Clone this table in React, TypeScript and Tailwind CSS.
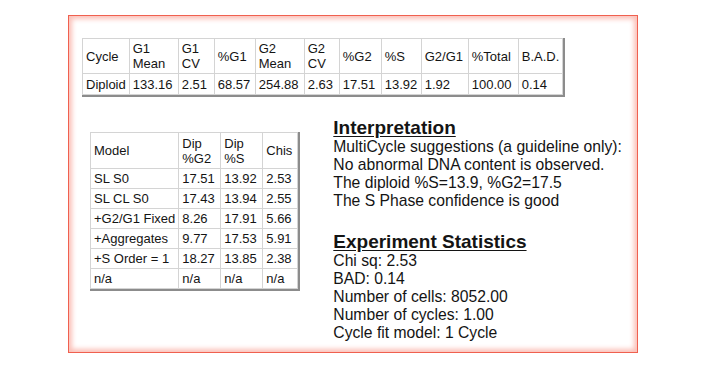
const cycleHead = ['Cycle', 'G1\nMean', 'G1\nCV', '%G1', 'G2\nMean', 'G2\nCV', '%G2', '%S', 'G2/G1', '%Total', 'B.A.D.']
const cycleRow = ['Diploid', '133.16', '2.51', '68.57', '254.88', '2.63', '17.51', '13.92', '1.92', '100.00', '0.14']
const cycleW = [46, 49, 36, 41, 49, 35, 42, 40, 47, 50, 44]

const modelHead = ['Model', 'Dip\n%G2', 'Dip\n%S', 'Chis']
const modelRows = [
  ['SL S0', '17.51', '13.92', '2.53'],
  ['SL CL S0', '17.43', '13.94', '2.55'],
  ['+G2/G1 Fixed', '8.26', '17.91', '5.66'],
  ['+Aggregates', '9.77', '17.53', '5.91'],
  ['+S Order = 1', '18.27', '13.85', '2.38'],
  ['n/a', 'n/a', 'n/a', 'n/a'],
]
const modelW = [86, 42, 42, 35]

const cell = 'border border-[#d4d4d4] px-[3px] text-left align-middle text-[13px] font-normal leading-[15px] whitespace-pre'

const App = () => {
  return (
    <div className="min-h-[368px] w-[710px] bg-white pt-[15px] font-['Liberation_Sans',Arial,sans-serif] text-[#141414]">
      <div className="ml-[68px] h-[338px] w-[570px] border border-[#f0604f] bg-white pl-[13px] pt-[22px] shadow-[inset_0_0_5px_3px_#fbc0b8]">
        <table className="table-fixed border-collapse border-t border-l border-[#a8a8a8] shadow-[1px_1px_0_1px_#8c8c8c]">
          <colgroup>
            {cycleW.map((w, i) => (
              <col key={i} style={{ width: w }} />
            ))}
          </colgroup>
          <thead>
            <tr className="h-[35px]">
              {cycleHead.map((h) => (
                <th key={h} className={cell}>
                  {h}
                </th>
              ))}
            </tr>
          </thead>
          <tbody>
            <tr className="h-[21px]">
              {cycleRow.map((v, i) => (
                <td key={i} className={cell}>
                  {v}
                </td>
              ))}
            </tr>
          </tbody>
        </table>

        <div className="mt-[23px] flex">
          <table className="mt-[14px] ml-[8px] table-fixed border-collapse self-start border-t border-l border-[#a8a8a8] shadow-[1px_1px_0_1px_#8c8c8c]">
            <colgroup>
              {modelW.map((w, i) => (
                <col key={i} style={{ width: w }} />
              ))}
            </colgroup>
            <thead>
              <tr className="h-[36px]">
                {modelHead.map((h) => (
                  <th key={h} className={cell}>
                    {h}
                  </th>
                ))}
              </tr>
            </thead>
            <tbody>
              {modelRows.map((r, i) => (
                <tr key={i} className="h-[20px]">
                  {r.map((v, j) => (
                    <td key={j} className={cell}>
                      {v}
                    </td>
                  ))}
                </tr>
              ))}
            </tbody>
          </table>

          <div className="ml-[35px] flex flex-col text-[15.7px] leading-[18px]">
            <h2 className="text-[19px] leading-[20px] font-bold underline underline-offset-2">Interpretation</h2>
            <p>MultiCycle suggestions (a guideline only):</p>
            <p>No abnormal DNA content is observed.</p>
            <p>The diploid %S=13.9, %G2=17.5</p>
            <p>The S Phase confidence is good</p>

            <h2 className="mt-[22px] text-[19px] leading-[20px] font-bold underline underline-offset-2">
              Experiment Statistics
            </h2>
            <p>Chi sq: 2.53</p>
            <p>BAD: 0.14</p>
            <p>Number of cells: 8052.00</p>
            <p>Number of cycles: 1.00</p>
            <p>Cycle fit model: 1 Cycle</p>
          </div>
        </div>
      </div>
    </div>
  )
}

export default App
